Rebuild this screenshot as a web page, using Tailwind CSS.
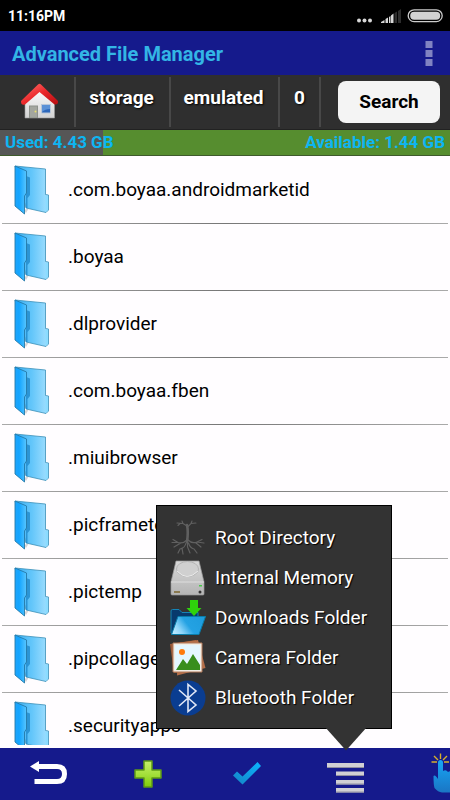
<!DOCTYPE html>
<html lang="en">
<head>
<meta charset="utf-8">
<meta name="viewport" content="width=device-width, initial-scale=1">
<title>Advanced File Manager</title>
<script src="https://cdn.jsdelivr.net/npm/@tailwindcss/browser@4"></script>
</head>
<body class="relative flex h-screen flex-col overflow-hidden bg-[#fffdff] font-['Roboto','Liberation_Sans',sans-serif]">

<svg class="absolute size-0" aria-hidden="true">
  <defs>
    <linearGradient id="fl" x1="0" x2="1"><stop offset="0" stop-color="#1fa5fb"/><stop offset=".35" stop-color="#12a4ff"/><stop offset="1" stop-color="#58c6ff"/></linearGradient>
    <linearGradient id="fr" x1="0" x2="1"><stop offset="0" stop-color="#3aaef2"/><stop offset=".5" stop-color="#63c6fa"/><stop offset="1" stop-color="#a4e0ff"/></linearGradient>
    <symbol id="folder" viewBox="0 0 36 50">
      <path d="M10 45 L15 43 L12 48Z" fill="#bbb" opacity=".6"/>
      <path d="M1 1 L31.500 4 V29.500 L34.500 30 V45 L32 47.500 L12 43Z" fill="url(#fr)" stroke="#3b8fb8" stroke-width=".8"/>
      <path d="M12 11 L16 12.500 V30 L13.500 33 V43 L12 43Z" fill="#1c86c8" opacity=".75"/>
      <path d="M1 1 L12.500 6 V28 L10.500 31 V49 L1 41Z" fill="url(#fl)" stroke="#2579a8" stroke-width=".9"/>
      <path d="M31.500 31 L34 31 V45 L31.500 47Z" fill="#8bdcff"/>
    </symbol>
  </defs>
</svg>

<div class="flex h-[31px] shrink-0 items-center justify-between bg-black pt-px pr-[7px] pl-2 text-white">
  <time class="text-[14px] font-bold">11:16PM</time>
  <svg class="h-[14px] w-[87px]" viewBox="0 0 87 14" aria-label="Signal and battery">
    <g fill="#d8d8d8"><circle cx="3" cy="11.500" r="2"/><circle cx="8.500" cy="11.500" r="2"/><circle cx="14" cy="11.500" r="2"/></g>
    <path d="M25 14 V13 L28.500 11 V14Z M29.500 14 V10 L32 8.500 V14Z M33 14 V8 L34.500 7 V14Z M35 14 V6.500 L37.500 4.500 V14Z" fill="#d8d8d8"/>
    <path d="M38.500 14 V4 L41 2.500 V14Z M42 14 V2 L45 0 V14Z" fill="#2d2d2d"/>
    <rect x="52.200" y=".8" width="34" height="11.800" rx="5.900" fill="none" stroke="#ccc" stroke-width="1.300"/>
    <rect x="54.200" y="2.700" width="30" height="8" rx="4" fill="#d2d2d2"/>
  </svg>
</div>

<header class="flex h-11 shrink-0 items-center justify-between bg-[#151a8c] pt-px pr-[17px] pl-3">
  <h1 class="text-[20px] font-bold text-[#33b5e5]">Advanced File Manager</h1>
  <button aria-label="More options"><svg class="h-[26px] w-[8px]" viewBox="0 0 8 26" fill="#8083c2"><path d="M0.500 0h7v7h-7z M0.500 9h7v7h-7z M0.500 18h7v7h-7z"/></svg></button>
</header>

<nav aria-label="Path" class="flex h-[55px] shrink-0 items-stretch border-b border-[#222] bg-[#2f2f2f] py-[2px] pr-[10px] text-[19px] font-bold text-white">
  <a href="#" aria-label="Home" class="flex w-[76px] items-center justify-center border-r-2 border-[#484848] pb-[2px] pl-1">
    <svg class="h-[37px] w-[39px]" viewBox="0 0 39 37">
      <defs><linearGradient id="hw" x2="0" y2="1"><stop offset="0" stop-color="#fff"/><stop offset="1" stop-color="#d2d2d2"/></linearGradient><linearGradient id="hr" x2="1" y2="1"><stop offset="0" stop-color="#ff7771"/><stop offset=".5" stop-color="#eb282b"/><stop offset="1" stop-color="#b50d10"/></linearGradient></defs>
      <path d="M5 17 L19.500 5 L34.500 17 V35 H5Z" fill="url(#hw)" stroke="#999" stroke-width=".6"/>
      <path d="M1 18 L18 1.500 Q19.500 0 21 1.500 L38 18 Q38.500 22 34.500 21.500 L19.500 9 L5 21.500 Q1 23 1 18Z" fill="url(#hr)"/>
      <path d="M9 22.500h9V35H9z" fill="#8d918b"/><path d="M10 23.500h7v11h-7z" fill="#a3a69f"/><circle cx="15.500" cy="28.500" r="1" fill="#eadf6b"/>
      <path d="M21.500 21.500h9v8.500h-9z" fill="#2d67ba" stroke="#b9c6d8"/><path d="M22 22h8v4q-5 0-8 3z" fill="#5b91d6"/>
    </svg>
  </a>
  <a href="#" class="flex w-[95px] items-center justify-center border-r-2 border-[#484848] pr-[2px] pb-2 text-shadow-[1px_1px_2px_black]">storage</a>
  <a href="#" class="flex w-[109px] items-center justify-center border-r-2 border-[#484848] pr-[2px] pb-2 text-shadow-[1px_1px_2px_black]">emulated</a>
  <a href="#" class="flex w-[41px] items-center justify-center border-r-2 border-[#484848] pb-2 text-shadow-[1px_1px_2px_black]">0</a>
  <button class="my-1 ml-auto w-[102px] rounded-lg bg-[#f4f4f4] text-black">Search</button>
</nav>

<div class="flex h-[26px] shrink-0 items-center justify-between border-b border-[#3f5a2c] bg-linear-to-r from-[#565656] from-23% to-[#568d2f] to-23% px-[5px] text-[17px] font-bold text-[#0db5f2]">
  <span>Used: 4.43 GB</span>
  <span>Available: 1.44 GB</span>
</div>

<main class="mb-[3px] min-h-0 flex-1 overflow-hidden pt-px text-[19px] text-black">
  <ul>
    <li class="px-[2px]"><a href="#" class="flex h-[66px] items-center gap-[18px] pl-3"><svg class="h-[50px] w-9"><use href="#folder"/></svg>.com.boyaa.androidmarketid</a><div class="h-px bg-linear-to-r from-[#aaa] via-[#777] to-[#aaa]"></div></li>
    <li class="px-[2px]"><a href="#" class="flex h-[66px] items-center gap-[18px] pl-3"><svg class="h-[50px] w-9"><use href="#folder"/></svg>.boyaa</a><div class="h-px bg-linear-to-r from-[#aaa] via-[#777] to-[#aaa]"></div></li>
    <li class="px-[2px]"><a href="#" class="flex h-[66px] items-center gap-[18px] pl-3"><svg class="h-[50px] w-9"><use href="#folder"/></svg>.dlprovider</a><div class="h-px bg-linear-to-r from-[#aaa] via-[#777] to-[#aaa]"></div></li>
    <li class="px-[2px]"><a href="#" class="flex h-[66px] items-center gap-[18px] pl-3"><svg class="h-[50px] w-9"><use href="#folder"/></svg>.com.boyaa.fben</a><div class="h-px bg-linear-to-r from-[#aaa] via-[#777] to-[#aaa]"></div></li>
    <li class="px-[2px]"><a href="#" class="flex h-[66px] items-center gap-[18px] pl-3"><svg class="h-[50px] w-9"><use href="#folder"/></svg>.miuibrowser</a><div class="h-px bg-linear-to-r from-[#aaa] via-[#777] to-[#aaa]"></div></li>
    <li class="px-[2px]"><a href="#" class="flex h-[66px] items-center gap-[18px] pl-3"><svg class="h-[50px] w-9"><use href="#folder"/></svg>.picframetemp</a><div class="h-px bg-linear-to-r from-[#aaa] via-[#777] to-[#aaa]"></div></li>
    <li class="px-[2px]"><a href="#" class="flex h-[66px] items-center gap-[18px] pl-3"><svg class="h-[50px] w-9"><use href="#folder"/></svg>.pictemp</a><div class="h-px bg-linear-to-r from-[#aaa] via-[#777] to-[#aaa]"></div></li>
    <li class="px-[2px]"><a href="#" class="flex h-[66px] items-center gap-[18px] pl-3"><svg class="h-[50px] w-9"><use href="#folder"/></svg>.pipcollage</a><div class="h-px bg-linear-to-r from-[#aaa] via-[#777] to-[#aaa]"></div></li>
    <li class="px-[2px]"><a href="#" class="flex h-[66px] items-center gap-[18px] pl-3"><svg class="h-[50px] w-9"><use href="#folder"/></svg>.securityapps</a></li>
  </ul>
</main>

<footer class="flex h-[52px] shrink-0 overflow-hidden bg-[#151a8c]">
  <button aria-label="Back" class="flex w-[22%] shrink-0 items-center justify-center pr-[2px] pb-[2px]">
    <svg class="h-6 w-[37px]" viewBox="0 0 37 24"><path d="M7 5.500 H27 Q34.500 5.500 34.500 13 Q34.500 20.500 27 20.500 H4.500" fill="none" stroke="#fff" stroke-width="5"/><path d="M0 5.500 L9 0 V11Z" fill="#fff"/></svg>
  </button>
  <button aria-label="Add" class="flex w-[22%] shrink-0 items-center justify-center pr-[2px]">
    <svg class="size-7" viewBox="0 0 28 28"><defs><linearGradient id="pl" x2="0" y2="1"><stop offset="0" stop-color="#c4ee6a"/><stop offset=".5" stop-color="#a5e03c"/><stop offset="1" stop-color="#7fcb0a"/></linearGradient></defs><path d="M10 1 H18 V10 H27 V18 H18 V27 H10 V18 H1 V10 H10Z" fill="url(#pl)" stroke="#5d9a16" stroke-width="1.500" stroke-linejoin="round"/></svg>
  </button>
  <button aria-label="Select" class="flex w-[22%] shrink-0 items-center justify-center pr-[2px] pb-[2px]">
    <svg class="h-[23px] w-7" viewBox="0 0 28 23"><defs><linearGradient id="ck" x1="0" y1="1" x2="1" y2="0"><stop offset="0" stop-color="#1583c4"/><stop offset="1" stop-color="#0bb5ff"/></linearGradient></defs><path d="M0 13.500 L4 9.500 L9.500 14.500 L24.500 0 L28 4 L9.500 22.500Z" fill="url(#ck)"/></svg>
  </button>
  <button aria-label="Shortcuts" aria-expanded="true" class="flex w-[22%] shrink-0 items-center justify-center pt-2 pr-[2px]">
    <svg class="h-[30px] w-[37px]" viewBox="0 0 37 30" fill="#d0d0d4"><path d="M0 0h37v5H0z M9 8.500h28v4.500H9z M9 17h28v4.500H9z M9 25h28v4.500H9z"/><path d="M0 4h37v1H0z M9 12h28v1H9z M9 20.500h28v1H9z M9 28.500h28v1H9z" fill="#8f8fa0"/></svg>
  </button>
  <button aria-label="Touch" class="flex w-[22%] shrink-0 justify-center pt-[5px]">
    <svg class="h-10 w-8" viewBox="0 0 32 40"><defs><linearGradient id="hd" x2="0" y2="1"><stop offset="0" stop-color="#17a5f5"/><stop offset="1" stop-color="#1a76c4"/></linearGradient></defs>
      <path d="M1.500 9h5.500 M14 9h5 M4 3l4 4 M17 3l-4 4 M10.500 0.500v5.500" stroke="#d6b02c" stroke-width="1.400"/>
      <path d="M8 9.500 Q8 7 10.500 7 Q13 7 13 9.500 V18 Q16 16 18 19 Q21 17 23 20 Q27 18 28 22 V31 Q27 39.500 20 39.500 H12 Q8 39 4.500 35 Q3.500 32 3.500 23 Q5 21 8 26Z" fill="url(#hd)"/></svg>
  </button>
</footer>

<aside aria-label="Shortcuts" class="absolute right-[58px] bottom-[71px] w-[236px] border border-black bg-[#333] pt-3 pb-[10px] pl-[13px] text-[19px] text-white">
  <ul>
    <li><button class="flex h-10 items-center gap-[9px] text-shadow-[1px_1px_1px_black]">
      <svg class="size-9" viewBox="0 0 36 36" fill="none" stroke="#606060" stroke-linecap="round">
        <path d="M17 5 Q18.500 12 17 22" stroke-width="2.600"/>
        <path d="M17 6 L13 3.500 L7 3 M13 3.500 L12 1 M17.500 7 L21 3.500 L26 3 M21 3.500 L22 1 M10 3.500 L8 5.500" stroke-width="1.100"/>
        <path d="M17 20 Q13 24 8 22.500 L2 22.500 M8 22.500 L3 19.500 M10 23.500 L4 27 M18 20 Q22 24 27 22 L34 23 M27 22 L32 19.500 M26 23 L31 27 M16 23 Q15 28 10 29 L8 33 M12 28 L13 34 M18.500 23 Q20 28 24 29 L27 33 M17.500 22 V27 L20 33" stroke-width="1.200"/></svg>Root Directory</button></li>
    <li><button class="flex h-10 items-center gap-[9px] text-shadow-[1px_1px_1px_black]">
      <svg class="size-9" viewBox="0 0 36 36"><defs><linearGradient id="dk" x2="0" y2="1"><stop offset="0" stop-color="#d9d9d9"/><stop offset="1" stop-color="#b4b4b4"/></linearGradient></defs>
        <path d="M6 1 H29 L34 22 V34 Q34 35 33 35 H2 Q1 35 1 34 V22Z" fill="url(#dk)" stroke="#999" stroke-width=".7"/>
        <ellipse cx="17.500" cy="9" rx="11" ry="7.500" fill="#d0d0d0" stroke="#b4b4b4"/><path d="M7 11 Q17 22 28 11" fill="none" stroke="#ececec"/>
        <path d="M1 22 H34" stroke="#ddd"/><path d="M4 31h6v2H4z" fill="#8a7a50"/><circle cx="30" cy="32" r="1.500" fill="#333"/><path d="M29 25h3v1.500h-3z" fill="#48c948"/></svg>Internal Memory</button></li>
    <li><button class="flex h-10 items-center gap-[9px] text-shadow-[1px_1px_1px_black]">
      <svg class="size-9" viewBox="0 0 36 36"><defs><linearGradient id="df" x1="0" y1=".7" x2="1" y2=".3"><stop offset="0" stop-color="#b8e8ff"/><stop offset=".2" stop-color="#8fd6fa"/><stop offset=".5" stop-color="#24a2e3"/><stop offset="1" stop-color="#1e9cdd"/></linearGradient></defs>
        <path d="M1 33 V11 Q1 9.500 2.500 9.500 H9 L12 12.500 H28 V17 L26 34 H2Z" fill="#083a6d" stroke="#1584b6"/><path d="M8 16.500 H35.500 L29 34.500 H1.500Z" fill="url(#df)" stroke="#087daa"/><path d="M20 0 H28 V8 H31.500 L24 16 L16.500 8 H20Z" fill="#2fd20c"/></svg>Downloads Folder</button></li>
    <li><button class="flex h-10 items-center gap-[9px] text-shadow-[1px_1px_1px_black]">
      <svg class="size-9" viewBox="0 0 36 36"><path d="M0 4 L26 0 L30 31 L4 33Z" fill="#9c5a39"/><path d="M8 3 L28 0 L35.500 28 L7 35.500Z" fill="#b56f49"/><path d="M3 3 H32 V32 H3Z" fill="#f1ede5" stroke="#b27858"/><path d="M5 5h25v25H5z" fill="#e4f6ff"/><path d="M6 30 L13 19 L17 24 L23 14 L30 25 V30Z" fill="#388e1c"/><circle cx="12" cy="12" r="3" fill="#ff7a0c"/></svg>Camera Folder</button></li>
    <li><button class="flex h-10 items-center gap-[9px] text-shadow-[1px_1px_1px_black]">
      <svg class="size-9" viewBox="0 0 36 36"><circle cx="18" cy="18" r="17.500" fill="#0a3d91"/><path d="M9 10 L26 25 L18 31.500 V4.500 L26 11 L9 26" fill="none" stroke="#dfe7f6" stroke-width="1.600"/></svg>Bluetooth Folder</button></li>
  </ul>
  <svg class="absolute top-full right-6 h-[23px] w-[42px]" viewBox="0 0 42 23"><path d="M0 -1 H42 L21 22.500Z" fill="#333"/></svg>
</aside>
</body>
</html>
